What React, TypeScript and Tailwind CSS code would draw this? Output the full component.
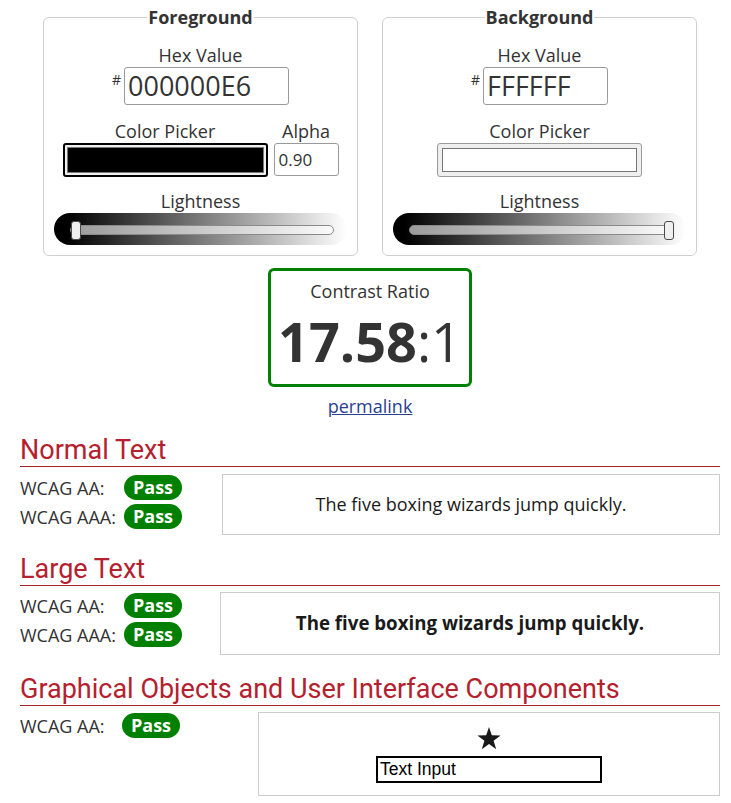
import React from 'react';

const SANS = { fontFamily: '"Open Sans", "Noto Sans", sans-serif' };
const HEAD = { fontFamily: 'Roboto, "Liberation Sans", sans-serif' };

function Slider({ pos }: { pos: 'left' | 'right' }) {
  return (
    <div className="relative h-[32px] w-[293px] rounded-full bg-[linear-gradient(to_right,#000_4%,#fff_100%)]">
      <div className="absolute left-[16px] right-[13px] top-[12px] h-[10px] rounded-full border border-[#8a8a8a] bg-white/60" />
      <div
        className={
          'absolute top-[8px] h-[19px] w-[10px] rounded-[3px] border-[1.5px] border-[#4a4a4a] bg-[#efefef] ' +
          (pos === 'left' ? 'left-[17px]' : 'right-[12px]')
        }
      />
    </div>
  );
}

function Panel({ title, hex, dark }: { title: string; hex: string; dark: boolean }) {
  return (
    <fieldset className="w-[315px] rounded-[6px] border border-[#cfcfcf] px-[10px] pb-[10px]">
      <legend className="mx-auto px-[1px] text-[18px] font-bold leading-[24px] text-[#333]">{title}</legend>
      <div className="mt-[14px] flex flex-col items-center">
        <div className="text-[18px] leading-[24px]">Hex Value</div>
        <div className="flex items-start gap-[3px]">
          <span className="mt-[6px] text-[14px] leading-none">#</span>
          <div
            className={
              'flex h-[38px] items-center rounded-[3px] border border-[#9a9a9a] pl-[3px] text-[27px] ' +
              (dark ? 'w-[165px]' : 'w-[125px]')
            }
          >
            {hex}
          </div>
        </div>
        <div className="mt-[14px] flex items-end gap-[6px]">
          <div className="flex flex-col items-center">
            <div className="text-[18px] leading-[24px]">Color Picker</div>
            {dark ? (
              <div className="h-[34px] w-[205px] rounded-[3px] border-2 border-black bg-[#efefef] p-[2px]">
                <div className="h-full w-full border border-[#777] bg-black" />
              </div>
            ) : (
              <div className="h-[34px] w-[205px] rounded-[3px] border border-[#9a9a9a] bg-[#efefef] p-[4px]">
                <div className="h-full w-full border border-[#777] bg-white" />
              </div>
            )}
          </div>
          {dark && (
            <div className="flex flex-col items-center">
              <div className="text-[18px] leading-[24px]">Alpha</div>
              <div className="mb-[1px] flex h-[33px] w-[65px] items-center rounded-[3px] border border-[#9a9a9a] pl-[4px] text-[17px]">
                0.90
              </div>
            </div>
          )}
        </div>
        <div className="mt-[12px] text-[18px] leading-[24px]">Lightness</div>
        <Slider pos={dark ? 'left' : 'right'} />
      </div>
    </fieldset>
  );
}

function Pass() {
  return (
    <span className="inline-block h-[25px] rounded-full bg-[#008000] px-[9px] text-[18px] font-bold leading-[25px] text-white">
      Pass
    </span>
  );
}

function Row({ label, w }: { label: string; w: string }) {
  return (
    <div className="flex h-[25px] items-center">
      <span className={'text-[18px] leading-[24px] ' + w}>{label}</span>
      <Pass />
    </div>
  );
}

function Heading({ children }: { children: React.ReactNode }) {
  return (
    <h2 style={HEAD} className="border-b border-[#a8242c] pb-[1px] text-[27px] leading-[30px] text-[#b5202e]">
      {children}
    </h2>
  );
}

export default function App() {
  return (
    <div style={SANS} className="w-[731px] bg-white pl-[20px] pr-[11px] pt-[5px] pb-[8px] text-[#333]">
      <div className="flex justify-center gap-[24px]">
        <Panel title="Foreground" hex="000000E6" dark />
        <Panel title="Background" hex="FFFFFF" dark={false} />
      </div>

      <div className="mt-[12px] flex flex-col items-center">
        <div className="flex h-[119px] w-[204px] flex-col items-center rounded-[6px] border-[3px] border-[#008000] pt-[8px]">
          <div className="text-[18px] leading-[24px]">Contrast Ratio</div>
          <div className="mt-[8px] text-[54px] leading-[60px]">
            <span className="font-bold">17.58</span>:1
          </div>
        </div>
        <a href="#" className="mt-[7px] text-[18px] leading-[24px] text-[#2a3f8e] underline">
          permalink
        </a>
      </div>

      <div className="mt-[17px]">
        <Heading>Normal Text</Heading>
        <div className="mt-[7px] flex">
          <div className="w-[202px] pt-[1px]">
            <Row label="WCAG AA:" w="w-[104px]" />
            <div className="mt-[4px]">
              <Row label="WCAG AAA:" w="w-[104px]" />
            </div>
          </div>
          <div className="flex h-[61px] flex-1 items-center justify-center border border-[#cccccc] text-[18px] text-[#1a1a1a]">
            The five boxing wizards jump quickly.
          </div>
        </div>
      </div>

      <div className="mt-[19px]">
        <Heading>Large Text</Heading>
        <div className="mt-[6px] flex">
          <div className="w-[200px] pt-[1px]">
            <Row label="WCAG AA:" w="w-[104px]" />
            <div className="mt-[4px]">
              <Row label="WCAG AAA:" w="w-[104px]" />
            </div>
          </div>
          <div className="flex h-[63px] flex-1 items-center justify-center border border-[#cccccc] text-[18.7px] font-bold text-[#1a1a1a]">
            The five boxing wizards jump quickly.
          </div>
        </div>
      </div>

      <div className="mt-[19px]">
        <Heading>Graphical Objects and User Interface Components</Heading>
        <div className="mt-[6px] flex">
          <div className="w-[238px] pt-[1px]">
            <Row label="WCAG AA:" w="w-[102px]" />
          </div>
          <div className="flex h-[84px] flex-1 flex-col items-center justify-center border border-[#cccccc]">
            <svg width="24" height="23" viewBox="0 0 24 23" className="mt-[1px]">
              <polygon
                points="12,0 14.8,8.3 23.6,8.4 16.6,13.7 19.2,22.2 12,17.1 4.8,22.2 7.4,13.7 0.4,8.4 9.2,8.3"
                fill="#1a1a1a"
              />
            </svg>
            <div
              style={{ fontFamily: '"Liberation Sans", Arial, sans-serif' }}
              className="mt-[6px] flex h-[27px] w-[226px] items-center border-2 border-black pl-[2px] text-[17.5px] text-black"
            >
              Text Input
            </div>
          </div>
        </div>
      </div>
    </div>
  );
}
